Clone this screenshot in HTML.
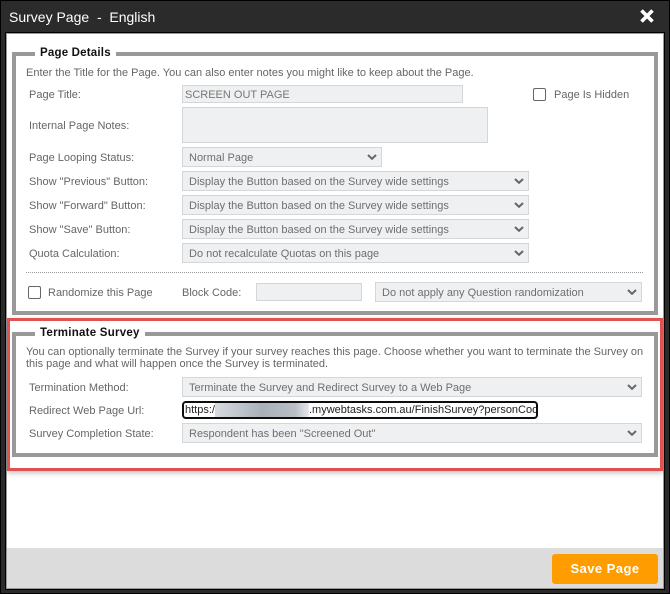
<!DOCTYPE html>
<html>
<head>
<meta charset="utf-8">
<style>
html,body{margin:0;padding:0;background:#2b2b2b;}
body{width:670px;height:594px;position:relative;overflow:hidden;font-family:"Liberation Sans",sans-serif;font-size:11px;color:#666;letter-spacing:0;}
.a{position:absolute;box-sizing:border-box;white-space:nowrap;}
.lb{left:29px;line-height:14px;}
.f{background:#eef0f2;border:1px solid #d4d7d9;left:182px;}
.s{background:#eef0f2;border:1px solid #d4d7d9;left:182px;padding-left:6px;color:#6f6f6f;line-height:20px;}
.s svg{position:absolute;right:4px;top:50%;margin-top:-3px;}
.fs{border:4px solid #999;left:12px;width:646px;}
.lg{background:#fff;color:#111;font-weight:bold;font-size:11.5px;line-height:14px;padding:0 5px;letter-spacing:.2px;}
.cb{width:13px;height:13px;border:1px solid #666;border-radius:2px;background:#fff;}
</style>
</head>
<body>
<div class="a" style="left:0;top:0;width:670px;height:594px;border:1px solid #000;"></div>
<div class="a" style="left:9px;top:9px;color:#fff;font-size:14px;line-height:16px;letter-spacing:0;white-space:pre;">Survey Page  -  English</div>
<svg class="a" style="left:639px;top:8px;" width="16" height="16" viewBox="0 0 16 16"><path d="M2.500 2.500L13.500 13.500M13.500 2.500L2.500 13.500" stroke="#fff" stroke-width="3.600" fill="none"/></svg>

<div class="a" style="left:5px;top:32px;width:660px;height:558px;border:1px solid #000;background:#888;"></div>
<div class="a" style="left:6px;top:33px;width:658px;height:556px;border:1px solid #999;background:#fff;"></div>

<div class="a fs" style="top:52px;height:263px;"></div>
<div class="a lg" style="left:35px;top:46px;">Page Details</div>
<div class="a" style="left:26px;top:66px;line-height:14px;">Enter the Title for the Page. You can also enter notes you might like to keep about the Page.</div>

<div class="a lb" style="top:88px;">Page Title:</div>
<div class="a f" style="top:85px;width:281px;height:18px;padding-left:2px;line-height:18px;color:#777;">SCREEN OUT PAGE</div>
<div class="a cb" style="left:533px;top:88px;"></div>
<div class="a" style="left:554px;top:88px;line-height:14px;">Page Is Hidden</div>

<div class="a lb" style="top:119px;">Internal Page Notes:</div>
<div class="a f" style="top:107px;width:306px;height:36px;"></div>

<div class="a lb" style="top:151px;">Page Looping Status:</div>
<div class="a s" style="top:147px;width:200px;height:20px;">Normal Page<svg width="10" height="6" viewBox="0 0 10 6"><path d="M1 1L5 4.800L9 1" stroke="#666" stroke-width="2" fill="none"/></svg></div>

<div class="a lb" style="top:175px;">Show "Previous" Button:</div>
<div class="a s" style="top:171px;width:347px;height:20px;">Display the Button based on the Survey wide settings<svg width="10" height="6" viewBox="0 0 10 6"><path d="M1 1L5 4.800L9 1" stroke="#666" stroke-width="2" fill="none"/></svg></div>

<div class="a lb" style="top:199px;">Show "Forward" Button:</div>
<div class="a s" style="top:195px;width:347px;height:20px;">Display the Button based on the Survey wide settings<svg width="10" height="6" viewBox="0 0 10 6"><path d="M1 1L5 4.800L9 1" stroke="#666" stroke-width="2" fill="none"/></svg></div>

<div class="a lb" style="top:223px;">Show "Save" Button:</div>
<div class="a s" style="top:219px;width:347px;height:20px;">Display the Button based on the Survey wide settings<svg width="10" height="6" viewBox="0 0 10 6"><path d="M1 1L5 4.800L9 1" stroke="#666" stroke-width="2" fill="none"/></svg></div>

<div class="a lb" style="top:247px;">Quota Calculation:</div>
<div class="a s" style="top:243px;width:347px;height:20px;">Do not recalculate Quotas on this page<svg width="10" height="6" viewBox="0 0 10 6"><path d="M1 1L5 4.800L9 1" stroke="#666" stroke-width="2" fill="none"/></svg></div>

<div class="a" style="left:26px;top:272px;width:617px;height:1px;border-top:1px dotted #999;"></div>

<div class="a cb" style="left:28px;top:286px;"></div>
<div class="a" style="left:48px;top:286px;line-height:14px;">Randomize this Page</div>
<div class="a" style="left:182px;top:286px;line-height:14px;">Block Code:</div>
<div class="a f" style="left:256px;top:283px;width:106px;height:18px;"></div>
<div class="a s" style="left:375px;top:282px;width:267px;height:20px;">Do not apply any Question randomization<svg width="10" height="6" viewBox="0 0 10 6"><path d="M1 1L5 4.800L9 1" stroke="#666" stroke-width="2" fill="none"/></svg></div>

<div class="a" style="left:7px;top:318px;width:656px;height:153px;border:3px solid #df524f;box-shadow:0 2px 5px rgba(0,0,0,.25);"></div>

<div class="a fs" style="top:332px;height:125px;"></div>
<div class="a lg" style="left:35px;top:326px;letter-spacing:.25px;">Terminate Survey</div>
<div class="a" style="left:26px;top:346px;line-height:12px;">You can optionally terminate the Survey if your survey reaches this page. Choose whether you want to terminate the Survey on<br>this page and what will happen once the Survey is terminated.</div>

<div class="a lb" style="top:381px;">Termination Method:</div>
<div class="a s" style="top:377px;width:460px;height:20px;">Terminate the Survey and Redirect Survey to a Web Page<svg width="10" height="6" viewBox="0 0 10 6"><path d="M1 1L5 4.800L9 1" stroke="#666" stroke-width="2" fill="none"/></svg></div>

<div class="a lb" style="top:404px;">Redirect Web Page Url:</div>
<div class="a" style="left:182px;top:401px;width:356px;height:18px;border:2px solid #0d0d0d;border-radius:4px;background:#fff;color:#222;padding-left:1px;line-height:15px;overflow:hidden;">https:/<span style="display:inline-block;width:94px;height:14px;vertical-align:top;background:linear-gradient(90deg,#d6dbe0,#a9b0b8 50%,#b9bec4 85%,#e6e8ea);"></span>.mywebtasks.com.au/FinishSurvey?personCode</div>

<div class="a lb" style="top:427px;">Survey Completion State:</div>
<div class="a s" style="top:423px;width:460px;height:20px;">Respondent has been "Screened Out"<svg width="10" height="6" viewBox="0 0 10 6"><path d="M1 1L5 4.800L9 1" stroke="#666" stroke-width="2" fill="none"/></svg></div>

<div class="a" style="left:7px;top:548px;width:656px;height:40px;background:#dcdcdc;"></div>
<div class="a" style="left:552px;top:554px;width:106px;height:30px;background:#ff9c00;border-radius:3px;color:#fff;font-weight:bold;font-size:13px;line-height:30px;text-align:center;letter-spacing:.45px;">Save Page</div>
</body>
</html>
